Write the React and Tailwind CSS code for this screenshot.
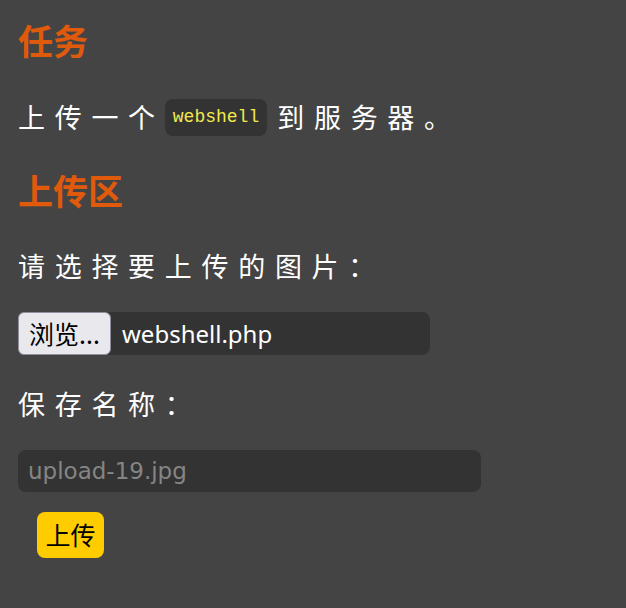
export default function App() {
  const cjk = { fontFamily: '"Noto Sans CJK SC", "Noto Sans", sans-serif' };
  return (
    <div className="min-h-[608px] w-full bg-[#444444] pl-[18px] pt-[18px] text-white" style={cjk}>
      <h2 className="h-[44px] text-[35px] font-bold leading-[44px] text-[#e05a0c]">任务</h2>
      <p className="mt-[35px] flex h-[40px] items-center text-[27px] leading-[40px] tracking-[9.7px]">
        <span>上传一个</span>
        <code
          className="flex h-[37px] items-center rounded-[8px] bg-[#333333] px-[8px] text-[18px] font-normal tracking-normal text-[#f2e94e]"
          style={{ fontFamily: '"Liberation Mono", monospace' }}
        >
          webshell
        </code>
        <span className="ml-[10px]">到服务器。</span>
      </p>
      <h2 className="mt-[31px] h-[44px] text-[35px] font-bold leading-[44px] text-[#e05a0c]">上传区</h2>
      <p className="mt-[34px] h-[40px] text-[27px] leading-[40px] tracking-[9.7px]">请选择要上传的图片：</p>
      <div className="mt-[26px] flex h-[43px] w-[412px] items-center rounded-[8px] bg-[#333333]">
        <div className="flex h-[43px] w-[93px] items-center justify-center rounded-[6px] border border-[#8f8f9d] bg-[#e9e9ed] text-[25px] text-black">
          浏览...
        </div>
        <span className="ml-[11px] text-[24px] text-white" style={{ fontFamily: '"Noto Sans", sans-serif' }}>
          webshell.php
        </span>
      </div>
      <p className="mt-[29px] h-[40px] text-[27px] leading-[40px] tracking-[9.7px]">保存名称：</p>
      <div className="mt-[26px] flex h-[42px] w-[463px] items-center rounded-[8px] bg-[#333333] pl-[10px]">
        <span className="text-[23px] text-[#858585]" style={{ fontFamily: '"DejaVu Sans", sans-serif' }}>
          upload-19.jpg
        </span>
      </div>
      <div className="ml-[19px] mt-[20px] flex h-[46px] w-[67px] items-center justify-center rounded-[8px] bg-[#ffcc00] text-[25px] text-black">
        上传
      </div>
    </div>
  );
}
